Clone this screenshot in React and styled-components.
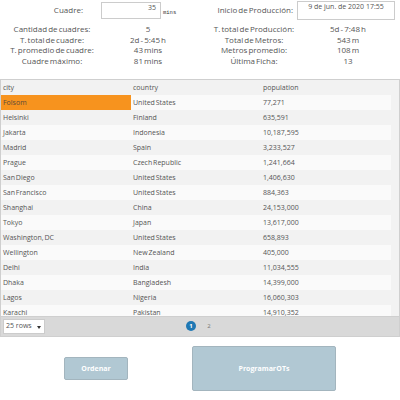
import React from "react";
import styled, { createGlobalStyle } from "styled-components";

const Global = createGlobalStyle`
  html, body { margin: 0; padding: 0; background: #fff; }
  body { font-family: "Open Sans", "Noto Sans", sans-serif; color: #555; width: 400px; height: 400px; overflow: hidden; }
  * { box-sizing: border-box; }
`;

const Page = styled.div`
  width: 400px;
  height: 400px;
  display: flex;
  flex-direction: column;
`;

const TopRow = styled.div`
  display: grid;
  grid-template-columns: 200px 200px;
  height: 22px;
  padding-top: 2px;
`;

const Field = styled.div`
  display: flex;
  align-items: flex-start;
`;

const FieldLabel = styled.div`
  width: ${(p) => p.$w}px;
  text-align: right;
  font-size: 8px;
  line-height: 16px;
  word-spacing: -1px;
`;

const InputBox = styled.div`
  width: ${(p) => p.$w}px;
  height: ${(p) => p.$h}px;
  margin-left: ${(p) => p.$ml}px;
  margin-top: ${(p) => p.$mt || 0}px;
  border: 1px solid #ccc;
  background: #fff;
  font-size: 7px;
  line-height: 10px;
  padding: 0 4px;
  text-align: ${(p) => p.$align};
  color: #555;
`;

const Unit = styled.span`
  font-family: "Liberation Mono", monospace;
  font-size: 5.5px;
  line-height: 16px;
  margin-left: 2px;
  margin-top: 3px;
  color: #333;
`;

const Stats = styled.div`
  display: grid;
  grid-template-columns: 104px 88px 124px 64px;
  font-size: 8px;
  line-height: 10.7px;
  margin-top: 2px;
  word-spacing: -1px;
`;

const StatCell = styled.div`
  text-align: center;
  white-space: nowrap;
`;

const TableWrap = styled.div`
  margin-top: 12px;
  width: 400px;
  border: 1px solid #cfcfcf;
  background: #f2f2f2;
  display: flex;
  flex-direction: column;
`;

const HeaderRow = styled.div`
  display: grid;
  grid-template-columns: 130px 130px 130px;
  height: 15px;
  font-size: 7px;
  line-height: 15px;
  color: #555;
`;

const HeadCell = styled.div`
  padding-left: 2px;
  overflow: hidden;
  white-space: nowrap;
`;

const ClipText = styled.span`
  display: inline-block;
  max-width: ${(p) => p.$max}px;
  overflow: hidden;
  vertical-align: top;
`;

const Body = styled.div`
  height: 221px;
  overflow: hidden;
  padding-right: 8px;
`;

const Row = styled.div`
  display: grid;
  grid-template-columns: 130px 130px 130px;
  height: 15px;
  font-size: 7px;
  line-height: 15px;
  background: ${(p) => (p.$odd ? "#f2f2f2" : "#fafafa")};
  word-spacing: -1px;
`;

const Cell = styled.div`
  padding-left: 2px;
  white-space: nowrap;
  background: ${(p) => (p.$sel ? "#f7931e" : "transparent")};
  color: ${(p) => (p.$sel ? "#5a4a3a" : "#555")};
`;

const Footer = styled.div`
  height: 20px;
  background: #d9d9d9;
  border-top: 1px solid #cfcfcf;
  display: flex;
  align-items: center;
  padding-left: 2px;
`;

const RowsSelect = styled.div`
  width: 42px;
  height: 15px;
  background: #fff;
  border: 1px solid #ccc;
  font-size: 7px;
  line-height: 11px;
  padding-left: 2px;
  display: flex;
  justify-content: space-between;
  color: #555;
`;

const Caret = styled.span`
  width: 0;
  height: 0;
  border-left: 2.5px solid transparent;
  border-right: 2.5px solid transparent;
  border-top: 3px solid #333;
  margin: 6px 3px 0 0;
`;

const Pager = styled.div`
  display: flex;
  align-items: center;
  gap: 8px;
  margin-left: 141px;
  font-size: 6px;
`;

const PageNum = styled.span`
  width: 10px;
  height: 10px;
  border-radius: 50%;
  background: ${(p) => (p.$active ? "#1f78b4" : "transparent")};
  color: ${(p) => (p.$active ? "#fff" : "#777")};
  font-weight: ${(p) => (p.$active ? 700 : 400)};
  display: flex;
  align-items: center;
  justify-content: center;
`;

const Actions = styled.div`
  display: flex;
  align-items: center;
  padding: 9px 0 0 64px;
  gap: 64px;
`;

const Button = styled.button`
  width: ${(p) => p.$w}px;
  height: ${(p) => p.$h}px;
  background: #b1c8d3;
  border: 1px solid #a3b5be;
  border-radius: 2px;
  color: #fff;
  font-family: "Open Sans", "Noto Sans", sans-serif;
  font-weight: 700;
  font-size: 7px;
  padding: 0;
  word-spacing: -1.5px;
`;

const stats = [
  ["Cantidad de cuadres:", "5", "T. total de Producción:", "5d - 7:48 h"],
  ["T. total de cuadre:", "2d - 5:45 h", "Total de Metros:", "543 m"],
  ["T. promedio de cuadre:", "43 mins", "Metros promedio:", "108 m"],
  ["Cuadre máximo:", "81 mins", "Última Ficha:", "13"],
];

const rows = [
  ["Folsom", "United States", "77,271"],
  ["Helsinki", "Finland", "635,591"],
  ["Jakarta", "Indonesia", "10,187,595"],
  ["Madrid", "Spain", "3,233,527"],
  ["Prague", "Czech Republic", "1,241,664"],
  ["San Diego", "United States", "1,406,630"],
  ["San Francisco", "United States", "884,363"],
  ["Shanghai", "China", "24,153,000"],
  ["Tokyo", "Japan", "13,617,000"],
  ["Washington, DC", "United States", "658,893"],
  ["Wellington", "New Zealand", "405,000"],
  ["Delhi", "India", "11,034,555"],
  ["Dhaka", "Bangladesh", "14,399,000"],
  ["Lagos", "Nigeria", "16,060,303"],
  ["Karachi", "Pakistan", "14,910,352"],
];

export default function App() {
  return (
    <Page>
      <Global />
      <TopRow>
        <Field>
          <FieldLabel $w={83}>Cuadre:</FieldLabel>
          <InputBox $w={60} $h={17} $ml={18} $align="right">35</InputBox>
          <Unit>mins</Unit>
        </Field>
        <Field>
          <FieldLabel $w={93}>Inicio de Producción:</FieldLabel>
          <InputBox $w={98} $h={19} $ml={4} $mt={-1} $align="center">9 de jun. de 2020 17:55</InputBox>
        </Field>
      </TopRow>
      <Stats>
        {stats.map((r, i) => r.map((c, j) => <StatCell key={i + "-" + j}>{c}</StatCell>))}
      </Stats>
      <TableWrap>
        <HeaderRow>
          <HeadCell>city</HeadCell>
          <HeadCell>country</HeadCell>
          <HeadCell><ClipText $max={37}>population</ClipText></HeadCell>
        </HeaderRow>
        <Body>
          {rows.map((r, i) => (
            <Row key={r[0]} $odd={i % 2 === 1}>
              <Cell $sel={i === 0}>{r[0]}</Cell>
              <Cell>{r[1]}</Cell>
              <Cell>{r[2]}</Cell>
            </Row>
          ))}
        </Body>
        <Footer>
          <RowsSelect>25 rows<Caret /></RowsSelect>
          <Pager>
            <PageNum $active>1</PageNum>
            <PageNum>2</PageNum>
          </Pager>
        </Footer>
      </TableWrap>
      <Actions>
        <Button $w={64} $h={23}>Ordenar</Button>
        <Button $w={144} $h={45}>Programar OTs</Button>
      </Actions>
    </Page>
  );
}
